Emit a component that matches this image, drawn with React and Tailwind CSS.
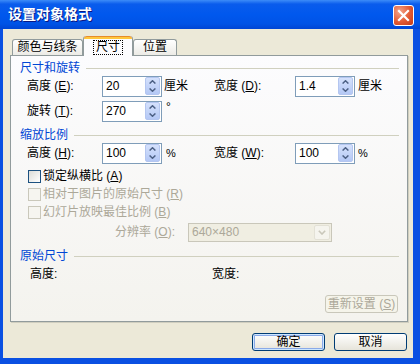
import React from 'react'

function Spin() {
  return (
    <div className="ml-auto mr-[1px] mb-[1px] w-[15px] flex flex-col rounded-[2px] border border-[#B4C6F0] bg-gradient-to-b from-[#D5E1FC] to-[#B4C8F5]">
      <div className="flex-1 flex items-center justify-center">
        <svg width="7" height="4" viewBox="0 0 7 4">
          <path d="M0.6 3.6 L3.5 0.7 L6.4 3.6" stroke="#4D6185" strokeWidth="1.4" fill="none" />
        </svg>
      </div>
      <div className="flex-1 flex items-center justify-center">
        <svg width="7" height="4" viewBox="0 0 7 4">
          <path d="M0.6 0.4 L3.5 3.3 L6.4 0.4" stroke="#4D6185" strokeWidth="1.4" fill="none" />
        </svg>
      </div>
    </div>
  )
}

function SpinBox({ value }) {
  return (
    <div className="w-[60px] h-[21px] border border-[#7F9DB9] bg-white flex items-stretch">
      <span className="self-center pl-[3px] text-[12px] leading-[13px]">{value}</span>
      <Spin />
    </div>
  )
}

function Label({ t, k, className }) {
  return (
    <span className={'text-[12px] leading-[13px] ' + (className || '')}>
      {t} (<u>{k}</u>):
    </span>
  )
}

function Head({ children, className }) {
  return (
    <div className={'flex items-center h-[13px] pl-[9px] pr-[8px] ' + className}>
      <span className="text-[#0046D5] text-[12px] leading-[13px]">{children}</span>
      <div className="flex-1 ml-[6px] h-px bg-[#D0D0BF]" />
    </div>
  )
}

function Check({ t, k, disabled, className }) {
  return (
    <div className={'flex items-center h-[13px] pl-[17px] ' + className}>
      {disabled ? (
        <div className="w-[13px] h-[13px] border border-[#CAC8BB] bg-[#F6F5F0]" />
      ) : (
        <div className="w-[13px] h-[13px] border border-[#1C5180] bg-gradient-to-br from-[#DCDCD7] to-white" />
      )}
      <span className={disabled ? 'ml-[2px] text-[12px] leading-[13px] text-[#ACA899]' : 'ml-[2px] text-[12px] leading-[13px]'}>
        {t} (<u>{k}</u>)
      </span>
    </div>
  )
}

function Tab({ children, active }) {
  if (active) {
    return (
      <div className="relative z-10 -mb-px w-[50px] h-[20px] flex flex-col bg-[#FCFCFE] border-x border-[#919B9C] rounded-t-[3px]">
        <div className="h-[3px] rounded-t-[3px] bg-[#FFC73C] border-t border-[#E68B2C]" />
        <div className="flex-1 flex items-center justify-center">
          <span className="px-[2px] border border-dotted border-black text-[12px] leading-[11px] py-[1px]">{children}</span>
        </div>
      </div>
    )
  }
  return (
    <div className="h-[16px] flex items-center justify-center border border-b-0 border-[#919B9C] rounded-t-[3px] bg-gradient-to-b from-white to-[#ECEBE6] text-[12px] leading-[13px]">
      {children}
    </div>
  )
}

export default function App() {
  return (
    <div className="w-[420px] h-[364px] flex flex-col bg-[#0A50E2] font-['Liberation_Sans','Noto_Sans_CJK_SC',sans-serif] text-black select-none overflow-hidden">
      {/* title bar */}
      <div className="h-[29px] flex items-start bg-[linear-gradient(180deg,#3D8CF8_0%,#0A5CEC_14%,#0058EE_50%,#0053E6_82%,#0045D4_100%)]">
        <span className="pl-[8px] pt-[7px] text-white font-bold text-[14px] leading-[15px] [text-shadow:1px_1px_#0A1883]">设置对象格式</span>
        <div className="ml-auto mr-[6px] mt-[5px] w-[21px] h-[21px] rounded-[3px] border border-white bg-[radial-gradient(circle_at_30%_30%,#F3A48A,#E35A33_55%,#C23A16)] flex items-center justify-center">
          <svg width="19" height="19" viewBox="0 0 19 19">
            <path d="M5 5 L14 14 M14 5 L5 14" stroke="white" strokeWidth="2.2" strokeLinecap="square" />
          </svg>
        </div>
      </div>

      {/* body */}
      <div className="flex-1 ml-[3px] mr-[7px] mb-[6px] bg-[#ECE9D8] flex flex-col pt-[7px] pl-[7px] pr-[5px]">
        <div className="h-[19px] flex items-end pl-[2px]">
          <div className="w-[71px]"><Tab>颜色与线条</Tab></div>
          <Tab active>尺寸</Tab>
          <div className="w-[44px]"><Tab>位置</Tab></div>
        </div>

        <div className="h-[267px] border border-[#919B9C] bg-gradient-to-b from-[#FCFCFE] to-[#F4F3EE] shadow-[1px_1px_0_#D0CEBF] flex flex-col">
          <Head className="mt-[6px]">尺寸和旋转</Head>

          <div className="mt-[1px] h-[21px] flex items-center pl-[16px]">
            <Label t="高度" k="E" className="w-[75px]" />
            <SpinBox value="20" />
            <span className="w-[52px] pl-[2px] text-[12px] leading-[13px]">厘米</span>
            <Label t="宽度" k="D" className="w-[81px]" />
            <SpinBox value="1.4" />
            <span className="pl-[3px] text-[12px] leading-[13px]">厘米</span>
          </div>

          <div className="mt-[4px] h-[21px] flex items-center pl-[16px]">
            <Label t="旋转" k="T" className="w-[75px]" />
            <SpinBox value="270" />
            <span className="self-start pl-[4px] text-[12px] leading-[13px]">°</span>
          </div>

          <Head className="mt-[7px]">缩放比例</Head>

          <div className="mt-[1px] h-[21px] flex items-center pl-[16px]">
            <Label t="高度" k="H" className="w-[75px]" />
            <SpinBox value="100" />
            <span className="w-[52px] pl-[4px] text-[11px] leading-[13px]">%</span>
            <Label t="宽度" k="W" className="w-[81px]" />
            <SpinBox value="100" />
            <span className="pl-[3px] text-[11px] leading-[13px]">%</span>
          </div>

          <Check t="锁定纵横比" k="A" className="mt-[6px]" />
          <Check t="相对于图片的原始尺寸" k="R" disabled className="mt-[5px]" />
          <Check t="幻灯片放映最佳比例" k="B" disabled className="mt-[5px]" />

          <div className="mt-[4px] h-[19px] flex items-center pl-[104px]">
            <Label t="分辨率" k="O" className="w-[73px] text-[#ACA899]" />
            <div className="w-[144px] h-[19px] border border-[#C9C7BA] bg-[#F0EEE2] flex items-stretch">
              <span className="self-center pl-[3px] text-[12px] leading-[13px] text-[#ACA899]">640×480</span>
              <div className="ml-auto w-[16px] m-px rounded-[2px] border border-[#E3E1D6] bg-[#F5F4EE] flex items-center justify-center">
                <svg width="8" height="5" viewBox="0 0 8 5">
                  <path d="M0.8 0.8 L4 4 L7.2 0.8" stroke="#C9C7BA" strokeWidth="1.6" fill="none" />
                </svg>
              </div>
            </div>
          </div>

          <Head className="mt-[8px]">原始尺寸</Head>

          <div className="mt-[5px] h-[13px] flex items-center pl-[19px] text-[12px] leading-[13px]">
            <span className="w-[182px]">高度:</span>
            <span>宽度:</span>
          </div>

          <div className="mt-[14px] flex justify-end pr-[9px]">
            <div className="w-[73px] h-[18px] rounded-[3px] border border-[#C9C7BA] bg-[#F5F4EA] flex items-center justify-center text-[12px] leading-[13px] text-[#ACA899]">
              重新设置 (<u>S</u>)
            </div>
          </div>
        </div>

        <div className="mt-[11px] flex justify-end gap-[9px] pr-[1px]">
          <button className="w-[73px] h-[18px] rounded-[3px] border border-[#003C74] bg-gradient-to-b from-white to-[#E6E4DA] shadow-[inset_0_0_0_1px_#CEE7FF,inset_0_0_0_2px_#8AAAE8] flex items-center justify-center text-[12px] leading-[13px]">
            确定
          </button>
          <button className="w-[73px] h-[18px] rounded-[3px] border border-[#003C74] bg-gradient-to-b from-white to-[#E6E4DA] flex items-center justify-center text-[12px] leading-[13px]">
            取消
          </button>
        </div>
      </div>
    </div>
  )
}
